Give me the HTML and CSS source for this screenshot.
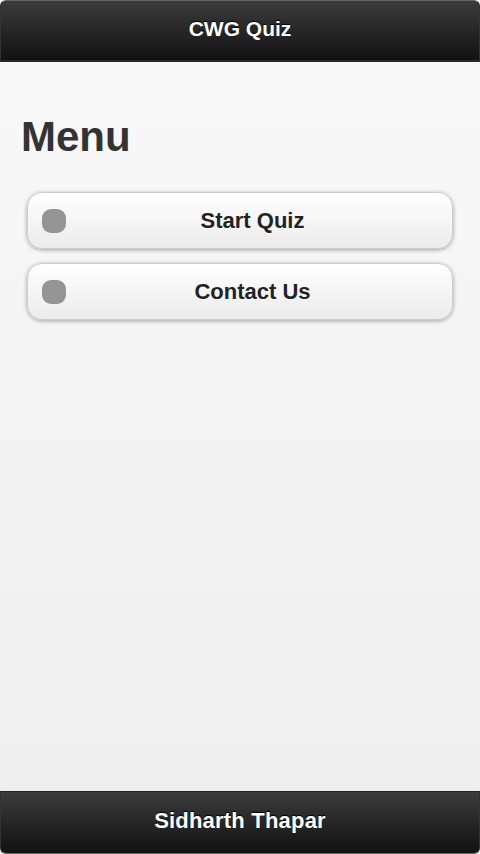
FILE: index.html
```html
<!DOCTYPE html>
<html>
<head>
<meta charset="utf-8">
<link rel="stylesheet" href="styles.css">
</head>
<body>
<div class="page">
  <header class="bar bar-top"><h2 class="bar-title">CWG Quiz</h2></header>
  <main class="content">
    <h1 class="heading">Menu</h1>
    <div class="menu">
      <a class="btn" href="#"><span class="btn-icon"></span><span class="btn-text">Start Quiz</span></a>
      <a class="btn" href="#"><span class="btn-icon"></span><span class="btn-text">Contact Us</span></a>
    </div>
  </main>
  <footer class="bar bar-bottom"><h2 class="bar-title">Sidharth Thapar</h2></footer>
</div>
</body>
</html>
```

FILE: styles.css
```css
* { box-sizing: border-box; }
html, body { margin: 0; padding: 0; }
body {
  font-family: "Liberation Sans", Arial, sans-serif;
  width: 480px;
  height: 854px;
  overflow: hidden;
}
.page {
  display: flex;
  flex-direction: column;
  height: 854px;
  background: linear-gradient(#f9f9f9, #eeeeee);
}
.bar {
  display: flex;
  align-items: center;
  justify-content: center;
  background: linear-gradient(#3c3c3c, #111111);
  border: 1px solid #333;
  color: #fff;
}
.bar-top {
  height: 62px;
  border-radius: 6px 6px 0 0;
  border-top-color: #666;
  border-bottom: 2px solid #2a2a2a;
  padding-bottom: 3px;
}
.bar-bottom {
  height: 63px;
  border-radius: 0 0 6px 6px;
  border-bottom-color: #666;
  border-top-color: #222;
  padding-bottom: 4px;
}
.bar-title {
  margin: 0;
  font-size: 21px;
  font-weight: bold;
  text-shadow: 0 -1px 1px #000;
}
.bar-bottom .bar-title { font-size: 22px; letter-spacing: 0.2px; }
.content {
  flex: 1;
  padding: 0 20px;
}
.heading {
  margin: 51px 0 0 1px;
  font-size: 42px;
  line-height: 48px;
  font-weight: bold;
  color: #333;
}
.menu {
  margin-top: 31px;
  padding: 0 7px;
  display: flex;
  flex-direction: column;
  gap: 14px;
}
.btn {
  display: flex;
  align-items: center;
  height: 57px;
  padding: 0 15px 0 14px;
  border: 1px solid #cccccc;
  border-radius: 15px;
  background: linear-gradient(#ffffff, #ebebeb);
  box-shadow: 0 1px 4px rgba(0,0,0,0.35);
  text-decoration: none;
  color: #222;
}
.btn-icon {
  width: 24px;
  height: 24px;
  border-radius: 9px;
  background: #959595;
  flex: none;
}
.btn-text {
  flex: 1;
  text-align: center;
  font-size: 22px;
  font-weight: bold;
  padding-left: 2px;
  text-shadow: 0 1px 0 #fff;
}
```
